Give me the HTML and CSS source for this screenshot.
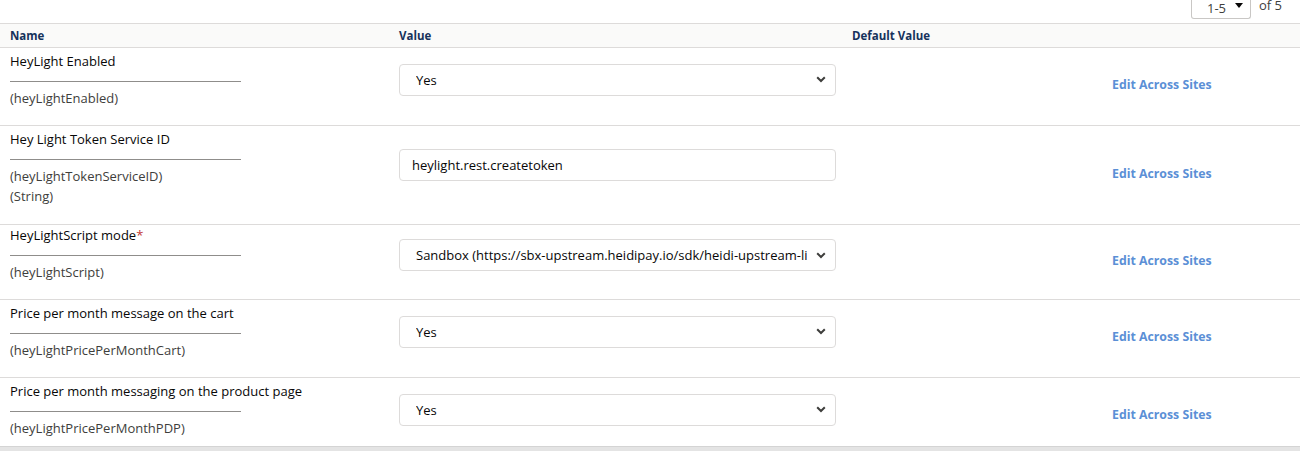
FILE: index.html
```html
<!DOCTYPE html>
<html>
<head>
<meta charset="utf-8">
<link rel="stylesheet" href="styles.css">
</head>
<body>
<div class="page">
  <div class="pager">
    <div class="pager-select"><span>1-5</span><svg class="caret" width="8" height="5" viewBox="0 0 8 5"><path d="M0 0h8L4 5z" fill="#080707"/></svg></div>
    <span class="pager-of">of 5</span>
  </div>
  <div class="table">
    <div class="row head">
      <div class="cell">Name</div>
      <div class="cell">Value</div>
      <div class="cell">Default Value</div>
      <div class="cell"></div>
    </div>

    <div class="row">
      <div class="cell name">
        <div class="label">HeyLight Enabled</div>
        <div class="rule"></div>
        <div class="meta">(heyLightEnabled)</div>
      </div>
      <div class="cell value">
        <div class="field select"><span class="txt">Yes</span><svg class="chev" width="10" height="7" viewBox="0 0 10 7"><path d="M1.2 1.2L5 5l3.8-3.8" fill="none" stroke="#3e3e3c" stroke-width="2"/></svg></div>
      </div>
      <div class="cell"></div>
      <div class="cell action"><a class="link">Edit Across Sites</a></div>
    </div>

    <div class="row tall">
      <div class="cell name">
        <div class="label">Hey Light Token Service ID</div>
        <div class="rule"></div>
        <div class="meta">(heyLightTokenServiceID)</div>
        <div class="meta">(String)</div>
      </div>
      <div class="cell value">
        <div class="field input"><span class="txt">heylight.rest.createtoken</span></div>
      </div>
      <div class="cell"></div>
      <div class="cell action"><a class="link">Edit Across Sites</a></div>
    </div>

    <div class="row short">
      <div class="cell name">
        <div class="label">HeyLightScript mode<span class="req">*</span></div>
        <div class="rule"></div>
        <div class="meta">(heyLightScript)</div>
      </div>
      <div class="cell value">
        <div class="field select"><span class="txt">Sandbox (https://sbx-upstream.heidipay.io/sdk/heidi-upstream-li</span><svg class="chev" width="10" height="7" viewBox="0 0 10 7"><path d="M1.2 1.2L5 5l3.8-3.8" fill="none" stroke="#3e3e3c" stroke-width="2"/></svg></div>
      </div>
      <div class="cell"></div>
      <div class="cell action"><a class="link">Edit Across Sites</a></div>
    </div>

    <div class="row">
      <div class="cell name">
        <div class="label">Price per month message on the cart</div>
        <div class="rule"></div>
        <div class="meta">(heyLightPricePerMonthCart)</div>
      </div>
      <div class="cell value">
        <div class="field select"><span class="txt">Yes</span><svg class="chev" width="10" height="7" viewBox="0 0 10 7"><path d="M1.2 1.2L5 5l3.8-3.8" fill="none" stroke="#3e3e3c" stroke-width="2"/></svg></div>
      </div>
      <div class="cell"></div>
      <div class="cell action"><a class="link">Edit Across Sites</a></div>
    </div>

    <div class="row">
      <div class="cell name">
        <div class="label">Price per month messaging on the product page</div>
        <div class="rule"></div>
        <div class="meta">(heyLightPricePerMonthPDP)</div>
      </div>
      <div class="cell value">
        <div class="field select"><span class="txt">Yes</span><svg class="chev" width="10" height="7" viewBox="0 0 10 7"><path d="M1.2 1.2L5 5l3.8-3.8" fill="none" stroke="#3e3e3c" stroke-width="2"/></svg></div>
      </div>
      <div class="cell"></div>
      <div class="cell action"><a class="link">Edit Across Sites</a></div>
    </div>
  </div>
</div>
</body>
</html>
```

FILE: styles.css
```css
html, body {
  margin: 0;
  padding: 0;
}
body {
  background: #e4e4e4;
  font-family: "Open Sans", "Noto Sans", sans-serif;
  font-size: 13px;
  color: #080707;
}
.page {
  background: #fff;
  height: 446px;
  overflow: hidden;
  border-bottom: 1px solid #d4d4d4;
}
.pager {
  height: 23px;
  display: flex;
  justify-content: flex-end;
  align-items: flex-start;
  padding-right: 18px;
}
.pager-select {
  width: 60px;
  height: 28px;
  margin-top: -9px;
  border: 1px solid #c9c7c5;
  border-top: none;
  border-radius: 0 0 3px 3px;
  box-sizing: border-box;
  display: flex;
  align-items: center;
  padding: 8px 0 0 15px;
  gap: 9px;
  font-size: 13px;
  color: #3e3e3c;
  line-height: 1;
}
.pager-select .caret { margin-top: -6px; }
.pager-of {
  margin-left: 8px;
  margin-top: -2px;
  font-size: 13px;
  color: #3e3e3c;
  line-height: 14px;
}
.table {
  border-top: 1px solid #dddbda;
}
.row {
  display: grid;
  grid-template-columns: 389px 453px 260px 1fr;
  border-bottom: 1px solid #dddbda;
}
.row.head {
  background: #fafaf9;
  height: 23px;
  align-items: center;
  font-size: 11.5px;
  font-weight: 700;
  color: #16325c;
}
.cell {
  padding-left: 10px;
}
.name {
  padding-top: 4px;
  padding-bottom: 17px;
}
.row.tall .name {
  padding-bottom: 18px;
}
.row.short .name {
  padding-top: 1px;
}
.label {
  font-size: 13px;
  line-height: 18px;
  color: #080707;
}
.req {
  color: #c23934;
}
.rule {
  width: 231px;
  height: 1px;
  background: #8f8d8b;
  margin: 11px 0 6px;
}
.meta {
  font-size: 13px;
  line-height: 20px;
  color: #3e3e3c;
}
.value {
  display: flex;
  align-items: center;
  padding-bottom: 14px;
}
.row.tall .value {
  padding-bottom: 21px;
}
.field {
  width: 437px;
  height: 32px;
  box-sizing: border-box;
  border: 1px solid #dddbda;
  border-radius: 4px;
  display: flex;
  align-items: center;
  background: #fff;
  color: #080707;
  font-size: 13px;
}
.select {
  padding: 0 9px 0 16px;
  justify-content: space-between;
}
.input {
  padding-left: 12px;
}
.txt {
  white-space: nowrap;
  overflow: hidden;
}
.action {
  display: flex;
  align-items: center;
  padding-bottom: 4px;
}
.link {
  color: #5b8fd6;
  font-weight: 700;
  font-size: 12.3px;
}
```
